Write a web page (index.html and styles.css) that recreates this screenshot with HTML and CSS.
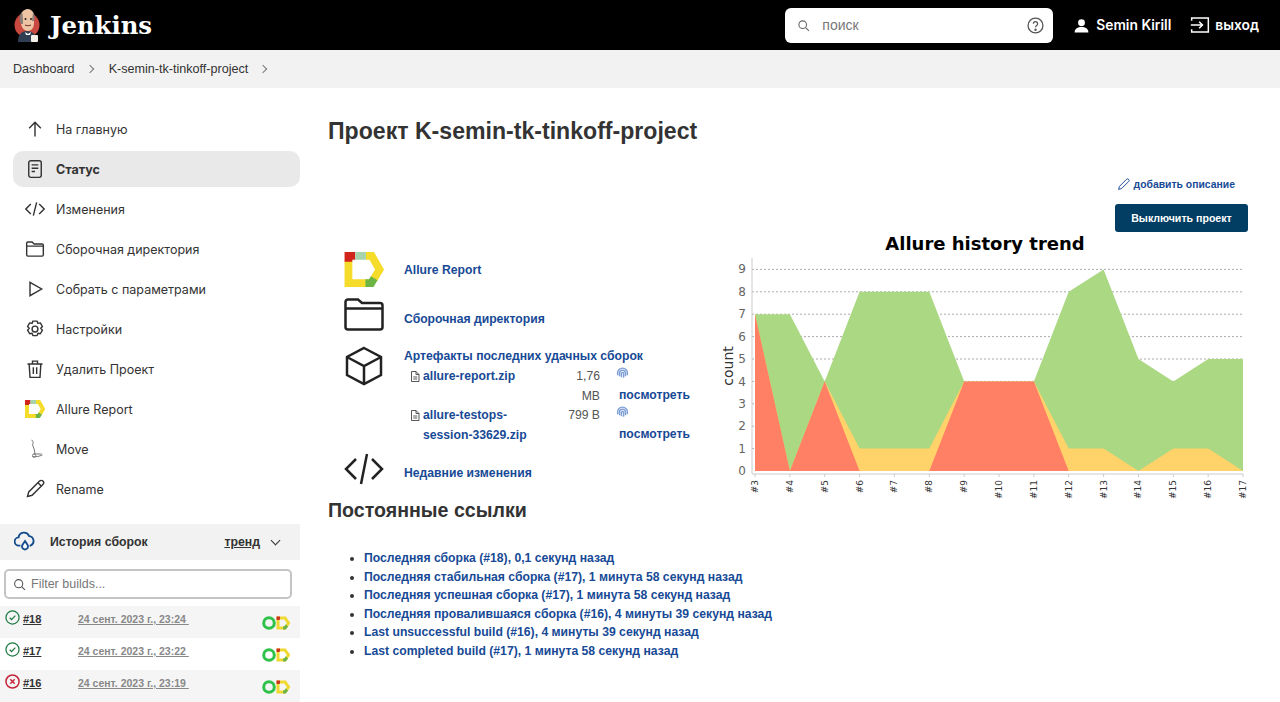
FILE: index.html
```html
<!DOCTYPE html>
<html>
<head>
  <title>K-semin-tk-tinkoff-project</title>
  <link rel="stylesheet" href="styles.css">
</head>
<body>
  <header class="topbar">
    <a class="brand" href="#">
      <svg class="brand-logo" viewBox="0 0 28 35">
        <circle cx="14" cy="17" r="12.5" fill="#c9483f"/>
        <path d="M5 34c0-7 3-11 9-11s10 4 10 11z" fill="#2f3e52"/>
        <path d="M8 8c0-5 4-7 7-7s6 3 6 7v7c0 5-3 8-6 8s-7-3-7-8z" fill="#eec5a4"/>
        <path d="M8 16c-2-4-2-9 1-12 1 3 1 8 1 12zM21 13c1-3 1-6-1-9 0 3-1 6-1 9z" fill="#8a8078"/>
        <circle cx="12.500" cy="11" r="1" fill="#222"/>
        <circle cx="18" cy="11" r="1" fill="#222"/>
        <path d="M12 17c2 1 4 1 6 0" stroke="#7a3a30" stroke-width="1.200" fill="none"/>
        <path d="M12 24l3 2 3-2-1 3h-4z" fill="#fff"/>
        <rect x="18" y="27" width="7" height="7" rx="1" fill="#f4f0e8"/>
      </svg>
      <span class="brand-name">Jenkins</span>
    </a>
    <div class="top-right">
      <div class="search">
        <svg class="search-icon" viewBox="0 0 24 24"><circle cx="10.500" cy="10.500" r="7"/><path d="M16 16l6 6"/></svg>
        <span class="search-text">поиск</span>
        <svg class="help-icon" viewBox="0 0 24 24"><circle cx="12" cy="12" r="10.500"/><path d="M9 9.500a3 3 0 1 1 4.600 2.500c-1 .7-1.600 1.300-1.600 2.500"/><circle class="dot" cx="12" cy="18" r=".8"/></svg>
      </div>
      <a class="top-link user" href="#">
        <svg class="user-icon" viewBox="0 0 24 24"><circle cx="12" cy="7.500" r="5.500"/><path d="M1 23c0-6 5-8.500 11-8.500S23 17 23 23z"/></svg>
        Semin Kirill
      </a>
      <a class="top-link logout" href="#">
        <svg class="logout-icon" viewBox="0 0 24 24"><path d="M2 7V3.500h20v17H2V17"/><path d="M1 12h14M11 8l4 4-4 4"/></svg>
        выход
      </a>
    </div>
  </header>

  <nav class="crumbs">
    <a href="#">Dashboard</a>
    <span class="chevron"></span>
    <a href="#">K-semin-tk-tinkoff-project</a>
    <span class="chevron"></span>
  </nav>

  <div class="page">
    <aside class="side">
      <ul class="side-menu">
        <li class="side-item">
          <svg class="ico" viewBox="0 0 24 24"><path d="M12 21V4M5 11l7-7 7 7"/></svg>
          На главную
        </li>
        <li class="side-item active">
          <svg class="ico" viewBox="0 0 24 24"><rect x="4.500" y="2" width="15" height="20" rx="2.500"/><path d="M8 7h8M8 11h8M8 15h4"/></svg>
          Статус
        </li>
        <li class="side-item">
          <svg class="ico" viewBox="0 0 24 24"><path d="M7 6l-6 6 6 6M17 6l6 6-6 6M14 4l-4 16"/></svg>
          Изменения
        </li>
        <li class="side-item">
          <svg class="ico" viewBox="0 0 24 24"><path d="M2 8V5a1.500 1.500 0 0 1 1.500-1.500h5L11 6h9.500A1.500 1.500 0 0 1 22 7.500V19a1.500 1.500 0 0 1-1.500 1.500h-17A1.500 1.500 0 0 1 2 19zM2 8.500h20"/></svg>
          Сборочная директория
        </li>
        <li class="side-item">
          <svg class="ico" viewBox="0 0 24 24"><path d="M6 4l14 8-14 8z"/></svg>
          Собрать с параметрами
        </li>
        <li class="side-item">
          <svg class="ico" viewBox="0 0 24 24"><circle cx="12" cy="12" r="3.500"/><path d="M9.500 2.500h5l1 2.800 2.900-.6 2.500 4.300-2 2.200 2 2.200-2.500 4.300-2.900-.6-1 2.800h-5l-1-2.800-2.900.6-2.500-4.300 2-2.200-2-2.200 2.500-4.300 2.900.6z" stroke-linejoin="round"/></svg>
          Настройки
        </li>
        <li class="side-item">
          <svg class="ico" viewBox="0 0 24 24"><path d="M5 6l1 16h12l1-16M3 6h18M9 6V2.500h6V6M10 10v8M14 10v8"/></svg>
          Удалить Проект
        </li>
        <li class="side-item">
          <svg class="ico" viewBox="0 0 40 36">
            <path class="al al-yellow" d="M4 9v23h21"/>
            <path class="al al-red" d="M4 10V4h7"/>
            <path class="al al-soft" d="M11 4h11"/>
            <path class="al al-yellow" d="M22 4h6l8 14-6 10"/>
            <path class="al al-green" d="M30.500 27l-3 5h-6"/>
          </svg>
          Allure Report
        </li>
        <li class="side-item">
          <svg class="ico" viewBox="0 0 24 24"><path class="thin" d="M8 1l2 3-1 3 2 5 1 6"/><path class="thin" d="M10 18h10M9 21c3 1 8 0 12-2"/><circle class="thin" cx="11" cy="20" r="2"/></svg>
          Move
        </li>
        <li class="side-item">
          <svg class="ico" viewBox="0 0 24 24"><path d="M3 21l1.500-5.500L17.500 2.500a2.500 2.500 0 0 1 4 4L8.500 19.500z M15.500 4.500l4 4"/></svg>
          Rename
        </li>
      </ul>

      <div class="history">
        <div class="history-head">
          <svg class="cloud" viewBox="0 0 24 24"><path d="M7 16H5.500a4.500 4.500 0 0 1-.5-9 6 6 0 0 1 11.500-1.500A5.500 5.500 0 0 1 18 16h-1"/><path class="drop" d="M12 11l3 4.500a3.300 3.300 0 1 1-6 0z"/></svg>
          <span class="history-title">История сборок</span>
          <a class="trend" href="#">тренд</a>
          <span class="caret"></span>
        </div>
        <div class="filter">
          <svg class="filter-icon" viewBox="0 0 24 24"><circle cx="10.500" cy="10.500" r="7.500"/><path d="M16 16l6 6"/></svg>
          <span>Filter builds...</span>
        </div>
        <div class="build shaded">
          <svg class="state ok" viewBox="0 0 24 24"><circle cx="12" cy="12" r="10.500"/><path d="M7.500 12.500l3 3 6-6.500"/></svg>
          <a class="build-num" href="#">#18</a>
          <a class="build-date" href="#">24 сент. 2023 г., 23:24&nbsp;</a>
          <svg class="mini" viewBox="0 0 28 16"><circle class="mini-ring" cx="7" cy="8" r="5.300"/><path class="mini-d" d="M16 3h7l3.500 5-3.500 5h-7z"/><path class="mini-red" d="M16 5V3h2"/><path class="mini-green" d="M25 10.500L23 13h-2"/></svg>
        </div>
        <div class="build">
          <svg class="state ok" viewBox="0 0 24 24"><circle cx="12" cy="12" r="10.500"/><path d="M7.500 12.500l3 3 6-6.500"/></svg>
          <a class="build-num" href="#">#17</a>
          <a class="build-date" href="#">24 сент. 2023 г., 23:22&nbsp;</a>
          <svg class="mini" viewBox="0 0 28 16"><circle class="mini-ring" cx="7" cy="8" r="5.300"/><path class="mini-d" d="M16 3h7l3.500 5-3.500 5h-7z"/><path class="mini-red" d="M16 5V3h2"/><path class="mini-green" d="M25 10.500L23 13h-2"/></svg>
        </div>
        <div class="build shaded">
          <svg class="state bad" viewBox="0 0 24 24"><circle cx="12" cy="12" r="10.500"/><path d="M8.500 8.500l7 7M15.500 8.500l-7 7"/></svg>
          <a class="build-num" href="#">#16</a>
          <a class="build-date" href="#">24 сент. 2023 г., 23:19&nbsp;</a>
          <svg class="mini" viewBox="0 0 28 16"><circle class="mini-ring" cx="7" cy="8" r="5.300"/><path class="mini-d" d="M16 3h7l3.500 5-3.500 5h-7z"/><path class="mini-red" d="M16 5V3h2"/><path class="mini-green" d="M25 10.500L23 13h-2"/></svg>
        </div>
      </div>
    </aside>

    <main class="content">
      <h1 class="title">Проект K-semin-tk-tinkoff-project</h1>
      <div class="actions">
        <a class="add-desc" href="#">
          <svg class="add-icon" viewBox="0 0 24 24"><path d="M3 21l1.500-5.500L17.500 2.500a2.500 2.500 0 0 1 4 4L8.500 19.500z"/></svg>
          добавить описание
        </a>
        <button class="disable-btn">Выключить проект</button>
      </div>

      <div class="columns">
        <div class="tasks">
          <div class="task task-allure">
            <svg class="task-icon" viewBox="0 0 40 36">
              <path class="al al-yellow" d="M4 9v23h21"/>
              <path class="al al-red" d="M4 10V4h7"/>
              <path class="al al-soft" d="M11 4h11"/>
              <path class="al al-yellow" d="M22 4h6l8 14-6 10"/>
              <path class="al al-green" d="M30.500 27l-3 5h-6"/>
            </svg>
            <a href="#">Allure Report</a>
          </div>
          <div class="task task-folder">
            <svg class="task-icon line" viewBox="0 0 40 33"><path d="M1.500 10V4a2.500 2.500 0 0 1 2.500-2.500h10L18 5h18a2.500 2.500 0 0 1 2.500 2.500V29a2.500 2.500 0 0 1-2.500 2.500H4A2.500 2.500 0 0 1 1.500 29zM1.500 10.500h37"/></svg>
            <a href="#">Сборочная директория</a>
          </div>
          <div class="task task-artifacts">
            <svg class="task-icon line" viewBox="0 0 40 40"><path d="M20 2l17 9v18l-17 9-17-9V11zM3 11l17 9 17-9M20 20v18"/></svg>
            <div class="artifacts">
              <a class="artifacts-title" href="#">Артефакты последних удачных сборок</a>
              <div class="artifact">
                <svg class="file" viewBox="0 0 24 24"><path d="M5 2h9l6 6v14H5zM14 2v6h6M8.500 13h8M8.500 17h8"/></svg>
                <a class="artifact-name" href="#">allure-report.zip</a>
                <span class="artifact-size">1,76 MB</span>
                <div class="artifact-view">
                  <svg class="print" viewBox="0 0 24 24"><path d="M12 2a9 9 0 0 1 9 9v4M12 2a9 9 0 0 0-9 9v4M12 6a5.500 5.500 0 0 1 5.500 5.500V17M12 6a5.500 5.500 0 0 0-5.500 5.500V17M12 10a2 2 0 0 1 2 2v8M12 10a2 2 0 0 0-2 2v7"/></svg>
                  <a href="#">посмотреть</a>
                </div>
              </div>
              <div class="artifact">
                <svg class="file" viewBox="0 0 24 24"><path d="M5 2h9l6 6v14H5zM14 2v6h6M8.500 13h8M8.500 17h8"/></svg>
                <a class="artifact-name" href="#">allure-testops-session-33629.zip</a>
                <span class="artifact-size">799 B</span>
                <div class="artifact-view">
                  <svg class="print" viewBox="0 0 24 24"><path d="M12 2a9 9 0 0 1 9 9v4M12 2a9 9 0 0 0-9 9v4M12 6a5.500 5.500 0 0 1 5.500 5.500V17M12 6a5.500 5.500 0 0 0-5.500 5.500V17M12 10a2 2 0 0 1 2 2v8M12 10a2 2 0 0 0-2 2v7"/></svg>
                  <a href="#">посмотреть</a>
                </div>
              </div>
            </div>
          </div>
          <div class="task task-changes">
            <svg class="task-icon line" viewBox="0 0 40 32"><path d="M12 6L2 16l10 10M28 6l10 10-10 10M23 1l-6 30"/></svg>
            <a href="#">Недавние изменения</a>
          </div>
        </div>

        <svg class="chart" viewBox="715 232 533 272">
          <g class="grid">
            <path d="M752 269.400H1243M752 291.800H1243M752 314.200H1243M752 336.600H1243M752 359H1243M752 381.400H1243M752 403.800H1243M752 426.200H1243M752 448.600H1243"/>
          </g>
          <polygon class="area-green" points="755,314.200 789.900,314.200 824.700,381.400 859.600,291.800 894.400,291.800 929.300,291.800 964.200,381.400 999,381.400 1033.900,381.400 1068.700,291.800 1103.600,269.400 1138.500,359 1173.300,381.400 1208.200,359 1243,359 1243,471 755,471"/>
          <polygon class="area-yellow" points="755,314.200 789.900,471 824.700,381.400 859.600,448.600 894.400,448.600 929.300,448.600 964.200,381.400 999,381.400 1033.900,381.400 1068.700,448.600 1103.600,448.600 1138.500,471 1173.300,448.600 1208.200,448.600 1243,471 755,471"/>
          <polygon class="area-red" points="755,314.200 789.900,471 824.700,381.400 859.600,471 894.400,471 929.300,471 964.200,381.400 999,381.400 1033.900,381.400 1068.700,471 755,471"/>
          <path class="axis" d="M752 258V474H1243M755 474v3M789.900 474v3M824.700 474v3M859.600 474v3M894.400 474v3M929.300 474v3M964.200 474v3M999 474v3M1033.900 474v3M1068.700 474v3M1103.600 474v3M1138.500 474v3M1173.300 474v3M1208.200 474v3M1243 474v3"/>
          <text class="chart-title" x="985" y="250">Allure history trend</text>
          <text class="y-name" transform="translate(733 366) rotate(-90)">count</text>
          <g class="y-ticks">
            <text x="746" y="475">0</text><text x="746" y="453">1</text><text x="746" y="430">2</text>
            <text x="746" y="408">3</text><text x="746" y="386">4</text><text x="746" y="363">5</text>
            <text x="746" y="341">6</text><text x="746" y="318">7</text><text x="746" y="296">8</text>
            <text x="746" y="273">9</text>
          </g>
          <g class="x-ticks">
            <text transform="translate(758 480) rotate(-90)">#3</text>
            <text transform="translate(793 480) rotate(-90)">#4</text>
            <text transform="translate(828 480) rotate(-90)">#5</text>
            <text transform="translate(863 480) rotate(-90)">#6</text>
            <text transform="translate(897 480) rotate(-90)">#7</text>
            <text transform="translate(932 480) rotate(-90)">#8</text>
            <text transform="translate(967 480) rotate(-90)">#9</text>
            <text transform="translate(1002 480) rotate(-90)">#10</text>
            <text transform="translate(1037 480) rotate(-90)">#11</text>
            <text transform="translate(1072 480) rotate(-90)">#12</text>
            <text transform="translate(1107 480) rotate(-90)">#13</text>
            <text transform="translate(1141 480) rotate(-90)">#14</text>
            <text transform="translate(1176 480) rotate(-90)">#15</text>
            <text transform="translate(1211 480) rotate(-90)">#16</text>
            <text transform="translate(1246 480) rotate(-90)">#17</text>
          </g>
        </svg>
      </div>

      <h2 class="perma-title">Постоянные ссылки</h2>
      <ul class="perma">
        <li><a href="#">Последняя сборка (#18), 0,1 секунд назад</a></li>
        <li><a href="#">Последняя стабильная сборка (#17), 1 минута 58 секунд назад</a></li>
        <li><a href="#">Последняя успешная сборка (#17), 1 минута 58 секунд назад</a></li>
        <li><a href="#">Последняя провалившаяся сборка (#16), 4 минуты 39 секунд назад</a></li>
        <li><a href="#">Last unsuccessful build (#16), 4 минуты 39 секунд назад</a></li>
        <li><a href="#">Last completed build (#17), 1 минута 58 секунд назад</a></li>
      </ul>
    </main>
  </div>
</body>
</html>
```

FILE: styles.css
```css
html, body {
  margin: 0;
  height: 702px;
  overflow: hidden;
}
body {
  font-family: "Liberation Sans", Arial, sans-serif;
  color: #333;
  background: #fff;
}
a {
  color: inherit;
  text-decoration: none;
}
ul {
  margin: 0;
}

/* top bar */
.topbar {
  height: 50px;
  background: #000;
  display: flex;
  align-items: center;
  justify-content: space-between;
  padding: 0 21px 0 13px;
  box-sizing: border-box;
}
.brand {
  display: flex;
  align-items: center;
  gap: 9px;
  color: #fff;
}
.brand-logo {
  width: 28px;
  height: 35px;
}
.brand-name {
  font-family: "DejaVu Serif", serif;
  font-weight: bold;
  font-size: 24.300px;
}
.top-right {
  display: flex;
  align-items: center;
}
.search {
  width: 268px;
  height: 35px;
  background: #fff;
  border-radius: 6px;
  display: flex;
  align-items: center;
  padding: 0 9px 0 12px;
  box-sizing: border-box;
  margin-right: 21px;
}
.search-icon {
  width: 13px;
  height: 13px;
  fill: none;
  stroke: #666;
  stroke-width: 2;
}
.search-text {
  margin-left: 12px;
  flex: 1;
  font-size: 14px;
  color: #777;
}
.help-icon {
  width: 17px;
  height: 17px;
  fill: none;
  stroke: #555;
  stroke-width: 1.800;
}
.help-icon .dot {
  fill: #555;
}
.top-link {
  display: flex;
  align-items: center;
  color: #fff;
  font-family: Inter, "Liberation Sans", sans-serif;
  font-weight: 600;
  font-size: 13.800px;
}
.user {
  gap: 7px;
  margin-right: 19px;
}
.user-icon {
  width: 15px;
  height: 15px;
  fill: #fff;
}
.logout {
  gap: 5px;
}
.logout-icon {
  width: 20px;
  height: 20px;
  fill: none;
  stroke: #fff;
  stroke-width: 1.800;
}

/* breadcrumb */
.crumbs {
  height: 38px;
  background: #f2f2f2;
  display: flex;
  align-items: center;
  padding-left: 13px;
  font-size: 12.600px;
  color: #333;
}
.chevron {
  width: 5px;
  height: 5px;
  border-top: 1px solid #777;
  border-right: 1px solid #777;
  transform: rotate(45deg);
  margin: 0 16px 0 12px;
}

.page {
  display: flex;
}

/* left side */
.side {
  width: 300px;
  flex: none;
}
.side-menu {
  list-style: none;
  padding: 23px 0 0 13px;
}
.side-item {
  height: 36px;
  margin-bottom: 4px;
  display: flex;
  align-items: center;
  gap: 11px;
  padding-left: 12px;
  border-radius: 10px;
  font-family: Inter, "Liberation Sans", sans-serif;
  font-size: 12.500px;
  color: #333;
}
.side-item.active {
  background: #e9e9e9;
  font-weight: bold;
}
.ico {
  width: 20px;
  height: 20px;
  flex: none;
  fill: none;
  stroke: #333;
  stroke-width: 1.700;
}
.ico .thin {
  stroke: #777;
  stroke-width: 1.200;
}
.ico .al {
  stroke-width: 8;
}
.al {
  fill: none;
  stroke-width: 8;
}
.ico .al-yellow, .al-yellow {
  stroke: #f6dc2a;
}
.ico .al-red, .al-red {
  stroke: #d0241c;
}
.ico .al-soft, .al-soft {
  stroke: #a7d2ae;
}
.ico .al-green, .al-green {
  stroke: #6cb544;
}

/* build history */
.history {
  margin-top: 17px;
}
.history-head {
  height: 36px;
  background: #f2f2f2;
  display: flex;
  align-items: center;
  padding-left: 14px;
  font-size: 12.300px;
  font-weight: bold;
}
.cloud {
  width: 22px;
  height: 22px;
  fill: none;
  stroke: #124c8c;
  stroke-width: 2;
}
.cloud .drop {
  fill: #fff;
}
.history-title {
  margin-left: 14px;
  flex: 1;
}
.trend {
  text-decoration: underline;
}
.caret {
  width: 6px;
  height: 6px;
  border-right: 1.500px solid #333;
  border-bottom: 1.500px solid #333;
  transform: rotate(45deg);
  margin: -3px 21px 0 12px;
}
.filter {
  margin: 9px 8px 7px 4px;
  height: 30px;
  box-sizing: border-box;
  border: 2px solid #c4c4c4;
  border-radius: 5px;
  display: flex;
  align-items: center;
  gap: 5px;
  padding-left: 7px;
  font-size: 12.500px;
  color: #777;
}
.filter-icon {
  width: 13px;
  height: 13px;
  fill: none;
  stroke: #555;
  stroke-width: 2;
}
.build {
  height: 32px;
  display: flex;
  align-items: flex-start;
  padding-left: 5px;
  box-sizing: border-box;
}
.build.shaded {
  background: #f5f5f5;
}
.state {
  width: 15px;
  height: 15px;
  margin-top: 4px;
  flex: none;
  fill: none;
  stroke-width: 2;
}
.state.ok {
  stroke: #1a7a40;
}
.state.bad {
  stroke: #c5253a;
  stroke-width: 2.400;
}
.build-num {
  margin: 7px 0 0 3px;
  width: 55px;
  font-size: 11px;
  font-weight: bold;
  text-decoration: underline;
}
.build-date {
  margin-top: 7px;
  width: 184px;
  font-size: 10.500px;
  font-weight: bold;
  color: #888;
  text-decoration: underline;
}
.mini {
  width: 28px;
  height: 16px;
  margin-top: 9px;
  fill: none;
}
.mini-ring {
  stroke: #2fc24a;
  stroke-width: 3;
}
.mini-d {
  stroke: #f0d830;
  stroke-width: 3;
}
.mini-red {
  stroke: #c83020;
  stroke-width: 3;
}
.mini-green {
  stroke: #6cb544;
  stroke-width: 3;
}

/* main column */
.content {
  flex: 1;
  padding: 28px 32px 0 28px;
  min-width: 0;
}
.title {
  margin: 0;
  font-size: 23.100px;
  line-height: 30px;
  font-weight: bold;
  color: #333;
}
.actions {
  margin-top: 30px;
  display: flex;
  flex-direction: column;
  align-items: flex-end;
}
.add-desc {
  display: flex;
  align-items: center;
  gap: 4px;
  height: 16px;
  margin-right: 13px;
  font-size: 10.400px;
  font-weight: bold;
  color: #174a96;
}
.add-icon {
  width: 13px;
  height: 13px;
  fill: none;
  stroke: #174a96;
  stroke-width: 1.800;
}
.disable-btn {
  margin-top: 12px;
  width: 133px;
  height: 28px;
  background: #023e63;
  color: #fff;
  border: none;
  border-radius: 3px;
  font: bold 10.600px "Liberation Sans", Arial, sans-serif;
}
.columns {
  display: flex;
  height: 266px;
}
.tasks {
  width: 387px;
  flex: none;
  padding: 20px 0 0 16px;
  box-sizing: border-box;
  font-size: 12.200px;
  font-weight: bold;
  color: #174a96;
}
.task {
  display: flex;
}
.task-icon {
  width: 40px;
  flex: none;
  margin-right: 20px;
}
.task-icon.line {
  fill: none;
  stroke: #222;
  stroke-width: 2.500;
}
.task-allure {
  height: 35px;
  align-items: center;
}
.task-allure .task-icon {
  height: 35px;
}
.task-folder {
  margin-top: 12px;
  align-items: flex-end;
  height: 32px;
}
.task-folder .task-icon {
  height: 33px;
}
.task-folder a {
  line-height: 24px;
}
.task-artifacts {
  margin-top: 14px;
}
.task-artifacts .task-icon {
  height: 40px;
  margin-top: 1px;
}
.artifacts {
  flex: 1;
  line-height: 19.400px;
  padding-top: 2px;
}
.artifacts-title {
  display: block;
  margin-bottom: 1px;
}
.artifact {
  display: grid;
  grid-template-columns: 14px 137px 40px 72px;
  padding-left: 5px;
}
.file {
  width: 12px;
  height: 13px;
  margin-top: 3px;
  fill: none;
  stroke: #444;
  stroke-width: 1.800;
}
.artifact-name {
  padding-right: 25px;
}
.artifact-size {
  font-weight: normal;
  color: #555;
  text-align: right;
}
.artifact-view {
  padding-left: 19px;
  white-space: nowrap;
}
.print {
  display: block;
  width: 13px;
  height: 15px;
  margin-left: -3px;
  margin-top: -1px;
  margin-bottom: 5px;
  fill: none;
  stroke: #7d9fd6;
  stroke-width: 2.600;
}
.task-changes {
  margin-top: 8px;
  align-items: flex-end;
}
.task-changes .task-icon {
  height: 32px;
}
.task-changes a {
  line-height: 24px;
}

/* trend chart */
.chart {
  width: 533px;
  height: 272px;
  display: block;
  flex: none;
}
.grid path {
  stroke: #aaa;
  stroke-width: 1;
  stroke-dasharray: 2 2;
  fill: none;
}
.area-green {
  fill: #a8d67e;
  fill-opacity: .96;
}
.area-yellow {
  fill: #ffd26a;
}
.area-red {
  fill: #ff7c64;
  fill-opacity: .96;
}
.axis {
  fill: none;
  stroke: #ccc;
  stroke-width: 1;
}
.chart-title {
  font-family: "DejaVu Sans", sans-serif;
  font-weight: bold;
  font-size: 18px;
  fill: #000;
  text-anchor: middle;
}
.y-name {
  font-family: "DejaVu Sans", sans-serif;
  font-size: 14px;
  fill: #333;
  text-anchor: middle;
}
.y-ticks text {
  font-family: "DejaVu Sans", sans-serif;
  font-size: 12px;
  fill: #666;
  text-anchor: end;
}
.x-ticks text {
  font-family: "DejaVu Sans", sans-serif;
  font-size: 9px;
  fill: #333;
  text-anchor: end;
}

/* permalinks */
.perma-title {
  margin: 0;
  font-size: 19.600px;
  line-height: 24px;
  font-weight: bold;
  color: #333;
}
.perma {
  margin-top: 27px;
  padding-left: 36px;
  font-size: 12.200px;
  font-weight: bold;
  line-height: 18.600px;
  color: #333;
}
.perma a {
  color: #174a96;
}
```
